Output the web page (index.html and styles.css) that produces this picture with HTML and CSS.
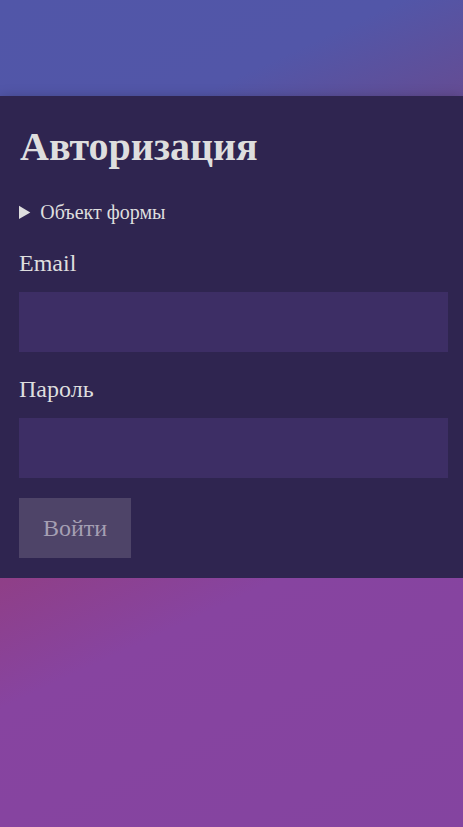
FILE: index.html
```html
<!DOCTYPE html>
<html lang="ru">
<head>
<meta charset="utf-8">
<title>Авторизация</title>
<link rel="stylesheet" href="styles.css">
</head>
<body>
<main class="card">
  <h1 class="title">Авторизация</h1>
  <details class="obj">
    <summary class="obj-summary">Объект формы</summary>
  </details>
  <form class="form">
    <label class="label" for="email">Email</label>
    <input class="input input-first" id="email" type="email">
    <label class="label" for="pass">Пароль</label>
    <input class="input" id="pass" type="password">
    <button class="btn" type="button">Войти</button>
  </form>
</main>
</body>
</html>
```
FILE: styles.css
```css
html {
  min-height: 100%;
  background: linear-gradient(155deg, #5156a8 0%, #5256a8 18%, #634d95 29%, #8f3f88 56%, #8744a0 68%, #8444a0 100%);
}
body {
  margin: 0;
  padding-top: 96px;
  font-family: "Liberation Serif", "Times New Roman", serif;
  color: #dedede;
}
.card {
  background: #2f2550;
  padding: 27px 15px 20px 19px;
  box-shadow: 0 5px 14px rgba(0, 0, 0, 0.4);
}
.title {
  margin: 0 0 31px 1px;
  font-size: 40px;
  font-weight: bold;
  line-height: normal;
  color: #dedede;
}
.obj {
  margin: 0 0 26px;
  font-size: 20px;
}
.obj-summary {
  cursor: pointer;
}
.form {
  display: flex;
  flex-direction: column;
  align-items: flex-start;
}
.label {
  font-size: 24px;
  line-height: normal;
  margin-bottom: 15px;
}
.input {
  box-sizing: border-box;
  width: 100%;
  height: 60px;
  border: none;
  background: #3d2e65;
  margin: 0;
  padding: 0 16px;
  font: inherit;
  color: #eee;
  outline: none;
}
.input-first {
  margin-bottom: 24px;
}
.btn {
  margin-top: 20px;
  height: 60px;
  width: 112px;
  border: none;
  background: #4e4468;
  color: #a59fb3;
  font-family: "Liberation Serif", "Times New Roman", serif;
  font-size: 24px;
  padding: 0;
}
```
